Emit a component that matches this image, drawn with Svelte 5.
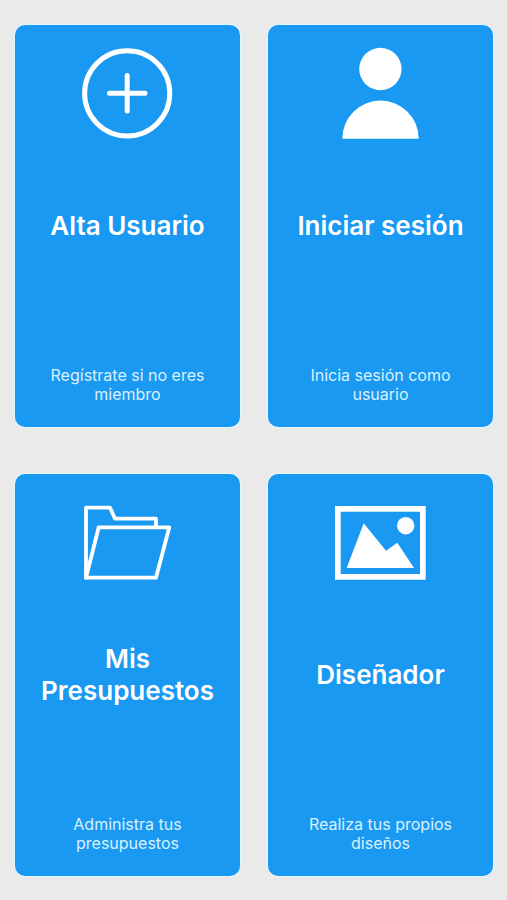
<script>
  const cards = [
    { icon: 'plus', title: 'Alta Usuario', text: 'Regístrate si no eres miembro' },
    { icon: 'user', title: 'Iniciar sesión', text: 'Inicia sesión como usuario' },
    { icon: 'folder', title: 'Mis Presupuestos', text: 'Administra tus presupuestos' },
    { icon: 'picture', title: 'Diseñador', text: 'Realiza tus propios diseños' }
  ];
</script>

<main class="menu">
  {#each cards as card}
    <button class="card" type="button">
      <svg class="icon" viewBox="0 0 91 91" aria-hidden="true">
        {#if card.icon === 'plus'}
          <circle class="line thick" cx="45.2" cy="45.3" r="42.6" />
          <path class="line thick" d="M45.2 27.5v35.6M27.4 45.3h35.6" />
        {:else if card.icon === 'user'}
          <circle class="solid" cx="45.4" cy="21" r="21.2" />
          <path class="solid" d="M7.3 90.7a38.2 38.2 0 0 1 76.4 0z" />
        {:else if card.icon === 'folder'}
          <path class="line" d="M4 80.7V10.7h24l5 11h41v8" />
          <path class="line" d="M16.7 30.3h70.6L74 80.7H4z" />
        {:else}
          <path class="solid" fill-rule="evenodd" d="M0 9h90.7v73.7H0zM5.7 14.7v62.3h79.3V14.7z" />
          <path class="solid" d="M11.7 71l17-44.8L51 53.7l11.3-8L79 71z" />
          <circle class="solid" cx="70.7" cy="28.7" r="8.7" />
        {/if}
      </svg>
      <span class="title">{card.title}</span>
      <span class="text">{card.text}</span>
    </button>
  {/each}
</main>

<style>
  :global(body) {
    margin: 0;
    background: #eaeaea;
  }

  .menu {
    box-sizing: border-box;
    min-height: 100vh;
    padding: 25px 14px 24px 15px;
    display: grid;
    grid-template-columns: 1fr 1fr;
    grid-template-rows: 1fr 1fr;
    gap: 47px 28px;
    font-family: Inter, "Liberation Sans", sans-serif;
  }

  .card {
    min-width: 0;
    margin: 0;
    padding: 23px 20px;
    border: 0;
    border-radius: 10px;
    box-shadow: 0 0 0 1px #e2f6ff;
    background: #1a99f2;
    color: #fff;
    font: inherit;
    text-align: center;
    cursor: pointer;
    display: grid;
    grid-template-rows: 1fr auto 1fr;
    justify-items: center;
  }

  .icon {
    width: 91px;
    height: 91px;
    overflow: visible;
  }

  .line {
    fill: none;
    stroke: #fff;
    stroke-width: 3.8;
    stroke-linecap: round;
    stroke-linejoin: round;
  }

  .thick {
    stroke-width: 5;
  }

  .solid {
    fill: #fff;
  }

  .title {
    font-size: 26px;
    line-height: 32px;
    font-weight: 600;
  }

  .text {
    align-self: end;
    max-width: 160px;
    font-size: 16px;
    line-height: 19px;
    color: #d9f1ff;
  }
</style>
